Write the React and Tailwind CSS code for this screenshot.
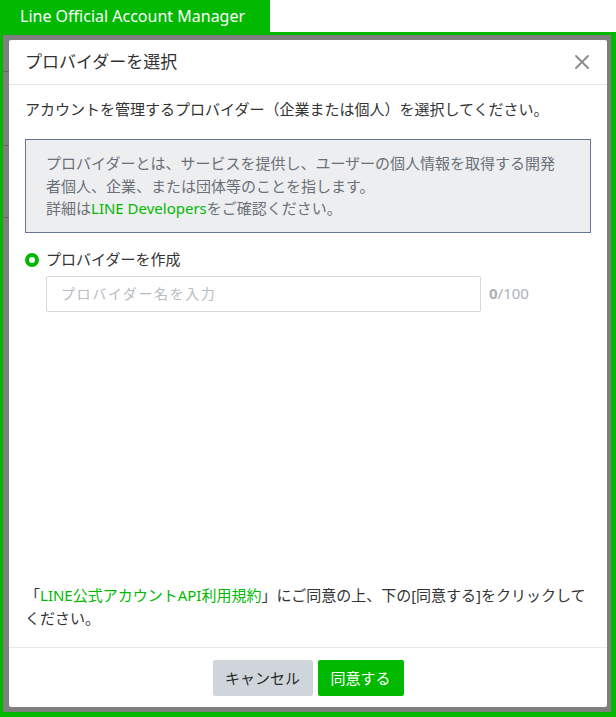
import React from 'react';

const jp = { fontFamily: '"Noto Sans", "Noto Sans CJK JP", sans-serif' };

function CloseIcon() {
  return (
    <svg width="14" height="14" viewBox="0 0 14 14" className="text-[#8a8a8a]">
      <path d="M1 1 L13 13 M13 1 L1 13" stroke="currentColor" strokeWidth="1.8" strokeLinecap="round" />
    </svg>
  );
}

function Backdrop() {
  // page underneath the overlay, only a few rules show at the edges
  return (
    <div className="absolute inset-0 overflow-hidden bg-white">
      <div className="absolute left-0 top-[36px] h-px w-[8px] bg-[#ccc]" />
      <div className="absolute left-0 top-[110px] h-px w-[8px] bg-[#ccc]" />
      <div className="absolute left-0 top-[182px] h-px w-[8px] bg-[#ccc]" />
    </div>
  );
}

export default function App() {
  return (
    <div className="h-[717px] w-[616px] overflow-hidden bg-white text-[#333]" style={jp}>
      <div className="flex h-[32px]">
        <div className="flex w-[270px] items-center bg-[#00b900] pl-5 text-[16px] text-white">
          Line Official Account Manager
        </div>
        <div className="flex-1 bg-white" />
      </div>

      <div className="relative h-[685px] border-b-[5px] border-l-[3px] border-r-[5px] border-t-[3px] border-[#00b900]">
        <Backdrop />
        <div className="absolute inset-0 bg-black/50 pb-[5px] pl-[6px] pr-[4px] pt-[5px]">
          <div className="flex h-full flex-col rounded-[2px] bg-white">
            <div className="flex h-[45px] items-center justify-between border-b border-[#e6e8eb] pl-4 pr-[18px]">
              <h2 className="text-[17px] text-[#333]">プロバイダーを選択</h2>
              <button type="button" className="flex items-center">
                <CloseIcon />
              </button>
            </div>

            <div className="flex flex-1 flex-col px-4 pt-3">
              <p className="text-[15px] leading-[24px]">
                アカウントを管理するプロバイダー（企業または個人）を選択してください。
              </p>

              <div className="mt-[18px] border border-[#6b7593] bg-[#edeef0] py-3 pl-5 pr-4 text-[15px] leading-[22.5px] text-[#6b7078]">
                プロバイダーとは、サービスを提供し、ユーザーの個人情報を取得する開発
                <br />
                者個人、企業、または団体等のことを指します。
                <br />
                詳細は<span className="text-[#00b900]">LINE Developers</span>をご確認ください。
              </div>

              <label className="mt-[15px] flex h-[24px] items-center gap-[7px]">
                <span className="h-[14px] w-[14px] rounded-full border-[4px] border-[#00b900] bg-white" />
                <span className="text-[15px] text-[#333]">プロバイダーを作成</span>
              </label>

              <div className="mt-1 flex items-center pl-[21px]">
                <input
                  type="text"
                  placeholder="プロバイダー名を入力"
                  className="h-[36px] w-[435px] rounded-[2px] border border-[#d4d8dd] px-[14px] text-[14px] tracking-[1.6px] placeholder:text-[#b7bcc2] focus:outline-none"
                />
                <span className="ml-2 text-[15px] text-[#aab1ba]">
                  <span className="font-bold">0</span>/100
                </span>
              </div>

              <p className="mt-auto pb-[17px] text-[15px] leading-[23px] text-[#333]">
                「<span className="text-[#00b900]">LINE公式アカウントAPI利用規約</span>」にご同意の上、下の[同意する]をクリックして
                <br />
                ください。
              </p>
            </div>

            <div className="flex justify-center gap-[5px] border-t border-[#e6e8eb] pb-[11px] pt-3">
              <button type="button" className="h-[36px] w-[100px] rounded-[2px] bg-[#d0d5dc] text-[15px] text-[#2b2b2b]">
                キャンセル
              </button>
              <button type="button" className="h-[36px] w-[86px] rounded-[2px] bg-[#00b900] text-[15px] text-white">
                同意する
              </button>
            </div>
          </div>
        </div>
      </div>
    </div>
  );
}
